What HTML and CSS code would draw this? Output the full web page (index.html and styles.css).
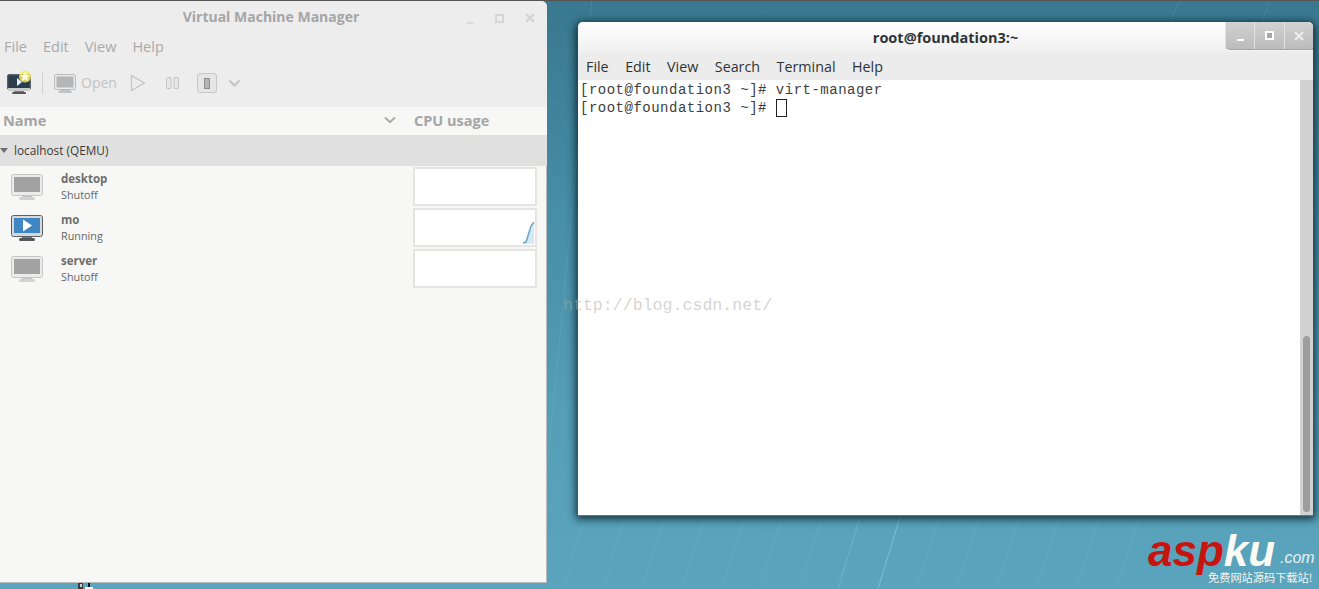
FILE: index.html
```html
<!DOCTYPE html>
<html lang="en">
<head>
<meta charset="utf-8">
<title>Virtual Machine Manager</title>
<link rel="stylesheet" href="styles.css">
</head>
<body>
<div class="desktop">
  <svg class="streaks" width="1319" height="589" viewBox="0 0 1319 589">
    <g stroke="#8fcbdc" stroke-width="1" fill="none" opacity=".16">
      <path d="M563 589L585 517"/><path d="M603 589L625 517"/><path d="M642 589L664 517"/><path d="M682 589L704 517"/><path d="M722 589L744 517"/><path d="M760 589L782 517"/><path d="M800 589L822 517"/>
      <path d="M917 589L939 517"/><path d="M957 589L979 517"/><path d="M997 589L1019 517"/><path d="M1037 589L1059 517"/><path d="M1077 589L1099 517"/><path d="M1117 589L1139 517"/>
      <path d="M548 460L592 0"/><path d="M1170 22L1180 0"/><path d="M1262 22L1270 0"/>
    </g>
    <path d="M838 589L860 517" stroke="#a5d6e4" stroke-width="1" opacity=".3"/>
    <path d="M878 589L900 517" stroke="#a5d6e4" stroke-width="1" opacity=".5"/>
  </svg>

  <svg class="behind-icons" width="15" height="6" viewBox="0 0 15 6">
    <rect x="0" y="0" width="5" height="6" fill="#3c3c3c"/><rect x="2" y="1" width="2" height="3" fill="#ccc"/>
    <rect x="10" y="0" width="2" height="5" fill="#111"/><rect x="7" y="4" width="8" height="2" fill="#fff"/>
  </svg>

  <section class="window vmm">
    <header class="vmm-title">
      <span class="vmm-title-text">Virtual Machine Manager</span>
      <div class="vmm-controls">
        <span class="ctl-min"></span>
        <span class="ctl-max"></span>
        <svg class="ctl-close" width="12" height="12" viewBox="0 0 12 12"><path d="M2 2L10 10M10 2L2 10" stroke="#d4d4d4" stroke-width="2.4"/></svg>
      </div>
    </header>
    <nav class="vmm-menu">
      <span>File</span><span>Edit</span><span>View</span><span>Help</span>
    </nav>
    <div class="vmm-toolbar">
      <svg class="tb-new" width="26" height="26" viewBox="0 0 26 26">
        <rect x="0.5" y="4.5" width="23" height="15" rx="1.5" fill="#3c4a58" stroke="#5d6266"/>
        <rect x="2" y="6" width="20" height="12" fill="#2d3d50"/>
        <path d="M10 8L15 12L10 16Z" fill="#eef2f6"/>
        <rect x="1" y="18" width="22" height="3" fill="#c9cbc8"/>
        <rect x="7" y="21" width="10" height="1" fill="#777"/>
        <rect x="5" y="22" width="14" height="2" rx="1" fill="#55585a"/>
        <circle cx="18" cy="6.5" r="6" fill="#f3ec62" opacity=".85"/>
        <path d="M18 1.5L19.5 5L23 5.3L20.3 7.6L21.2 11L18 9.2L14.8 11L15.7 7.6L13 5.3L16.5 5Z" fill="#fffbe0"/>
      </svg>
      <span class="tb-sep"></span>
      <svg class="tb-open" width="24" height="22" viewBox="0 0 24 22">
        <rect x="0.5" y="1.5" width="21" height="15" rx="1.5" fill="#e8e8e8" stroke="#bdbdbd"/>
        <rect x="2.5" y="3.5" width="17" height="11" fill="#b3b5b6"/>
        <rect x="6" y="17" width="10" height="1" fill="#bbb"/>
        <rect x="4" y="18" width="14" height="2" rx="1" fill="#c3c3c3"/>
      </svg>
      <span class="tb-label">Open</span>
      <svg class="tb-play" width="16" height="18" viewBox="0 0 16 18"><path d="M1.5 1.5L14.5 9L1.5 16.5Z" fill="#ececec" stroke="#c3c3c3" stroke-width="1.2"/></svg>
      <svg class="tb-pause" width="14" height="14" viewBox="0 0 14 14"><rect x="0.5" y="1.5" width="4.5" height="11" rx="1" fill="#e6e6e6" stroke="#c3c3c3"/><rect x="8" y="1.5" width="4.5" height="11" rx="1" fill="#e6e6e6" stroke="#c3c3c3"/></svg>
      <span class="tb-stop"><span class="tb-stop-inner"></span></span>
      <svg class="tb-chevron" width="13" height="9" viewBox="0 0 13 9"><path d="M1.5 1.5L6.5 6.5L11.5 1.5" fill="none" stroke="#c4c4c4" stroke-width="2"/></svg>
    </div>
    <div class="vmm-columns">
      <div class="col-name">
        <span>Name</span>
        <svg width="12" height="8" viewBox="0 0 12 8"><path d="M1 1.5L6 6.2L11 1.5" fill="none" stroke="#aaa" stroke-width="2"/></svg>
      </div>
      <div class="col-cpu">CPU usage</div>
    </div>
    <div class="vmm-group">
      <span class="group-arrow"></span>
      <span>localhost (QEMU)</span>
    </div>
    <ul class="vm-list">
      <li class="vm">
        <svg class="vm-icon" width="32" height="28" viewBox="0 0 32 28">
          <rect x="0.5" y="0.5" width="31" height="21" rx="2" fill="#ebebeb" stroke="#c6c6c6"/>
          <rect x="3" y="3" width="26" height="15" fill="#a2a2a2"/>
          <rect x="11" y="22" width="10" height="1" fill="#c4c4c4"/>
          <rect x="8" y="23" width="16" height="3" rx="1.5" fill="#d2d2d2"/>
        </svg>
        <div class="vm-text"><strong>desktop</strong><span>Shutoff</span></div>
        <div class="graph"></div>
      </li>
      <li class="vm">
        <svg class="vm-icon" width="32" height="28" viewBox="0 0 32 28">
          <rect x="0.5" y="0.5" width="31" height="21" rx="2" fill="#d6d8da" stroke="#5a5f63"/>
          <rect x="3" y="3" width="26" height="15" fill="#4186c4"/>
          <path d="M12 4.5L21 10.5L12 16.5Z" fill="#ffffff"/>
          <rect x="11" y="22" width="10" height="1" fill="#777"/>
          <rect x="8" y="23" width="16" height="3" rx="1.5" fill="#55585a"/>
        </svg>
        <div class="vm-text"><strong>mo</strong><span>Running</span></div>
        <div class="graph">
          <svg class="spark" width="12" height="22" viewBox="0 0 12 22">
            <path d="M0 21L3 20L8 4L11 0V22H0Z" fill="#d2e9f3"/>
            <path d="M0 21L3 20L8 4L11 0" fill="none" stroke="#6fa8c2" stroke-width="1.6"/>
          </svg>
        </div>
      </li>
      <li class="vm">
        <svg class="vm-icon" width="32" height="28" viewBox="0 0 32 28">
          <rect x="0.5" y="0.5" width="31" height="21" rx="2" fill="#ebebeb" stroke="#c6c6c6"/>
          <rect x="3" y="3" width="26" height="15" fill="#a2a2a2"/>
          <rect x="11" y="22" width="10" height="1" fill="#c4c4c4"/>
          <rect x="8" y="23" width="16" height="3" rx="1.5" fill="#d2d2d2"/>
        </svg>
        <div class="vm-text"><strong>server</strong><span>Shutoff</span></div>
        <div class="graph"></div>
      </li>
    </ul>
  </section>

  <section class="window term">
    <header class="term-title">root@foundation3:~</header>
    <div class="term-controls">
      <span class="term-btn"><span class="tc-min"></span></span>
      <span class="term-btn"><span class="tc-max"></span></span>
      <span class="term-btn"><svg width="12" height="12" viewBox="0 0 12 12"><path d="M2 2L10 10M10 2L2 10" stroke="#ececec" stroke-width="2.4"/></svg></span>
    </div>
    <nav class="term-menu">
      <span>File</span><span>Edit</span><span>View</span><span>Search</span><span>Terminal</span><span>Help</span>
    </nav>
    <div class="term-body">
      <pre class="term-text">[root@foundation3 ~]# virt-manager
[root@foundation3 ~]# <span class="cursor"></span></pre>
      <div class="term-scroll"><div class="term-thumb"></div></div>
    </div>
  </section>

  <div class="watermark">http://blog.csdn.net/</div>

  <div class="aspku">
    <div class="aspku-main"><span class="aspku-red">asp</span><span class="aspku-white">ku</span></div>
    <div class="aspku-com">.com</div>
    <div class="aspku-sub">免费网站源码下载站!</div>
  </div>
</div>
</body>
</html>
```
FILE: styles.css
```css
* { box-sizing: border-box; }
html, body { margin: 0; padding: 0; }
body { width: 1319px; height: 589px; overflow: hidden; font-family: "Open Sans", "Noto Sans", sans-serif; }

.desktop {
  position: relative;
  width: 1319px;
  height: 589px;
  overflow: hidden;
  border-top: 1px solid #555;
  background: linear-gradient(180deg, #39788f 0%, #468da5 35%, #549eb6 70%, #5aa5bd 100%);
}
.streaks { position: absolute; left: 0; top: -1px; }
.behind-icons { position: absolute; left: 78px; top: 582px; }

.window { position: absolute; }

/* Virtual Machine Manager */
.vmm {
  left: 0; top: 0;
  width: 547px; height: 582px;
  display: flex; flex-direction: column;
  background: #f7f7f5;
  border-radius: 0 6px 0 0;
  box-shadow: inset -1px -1px 0 #b9bcbc;
  overflow: hidden;
}
.vmm-title {
  height: 32px; flex: none;
  display: flex; align-items: center; justify-content: center;
  position: relative;
  background: #ededed;
}
.vmm-title-text { font-size: 14px; font-weight: 700; color: #a5a5a5; margin-left: -5px; margin-top: -1px; }
.vmm-controls {
  position: absolute; right: 11px; top: 11px;
  display: flex; align-items: center; gap: 20px;
}
.ctl-min { width: 7px; height: 2px; background: #dcdcdc; margin-top: 9px; }
.ctl-max { width: 9px; height: 9px; border: 2px solid #d6d6d6; margin-left: 1px; }
.vmm-menu {
  height: 27px; flex: none;
  display: flex; align-items: center; gap: 16px;
  padding: 0 0 0 4px;
  background: #ededed;
  font-size: 14.5px; color: #a9a9a9;
}
.vmm-toolbar {
  height: 47px; flex: none;
  display: flex; align-items: center;
  padding: 0 0 1px 7px;
  background: #ededed;
}
.tb-new { margin-right: 9px; }
.tb-sep { width: 1px; height: 22px; background: #d2d2d2; margin-right: 11px; }
.tb-open { margin-right: 3px; margin-top: 1px; }
.tb-label { font-size: 14px; color: #c2c2c2; width: 49px; margin-top: -1px; }
.tb-play { margin-right: 20px; }
.tb-pause { margin-right: 17px; }
.tb-stop {
  width: 20px; height: 20px; margin-right: 11px;
  display: flex; align-items: center; justify-content: center;
  border: 1px solid #c8c8c8; border-radius: 3px; background: #e6e6e6;
}
.tb-stop-inner { width: 6px; height: 11px; background: #b5b5b5; border: 1px solid #8e8e8e; }
.vmm-columns {
  height: 28px; flex: none;
  display: flex; align-items: center;
  padding-bottom: 2px;
  background: #f7f7f5;
  font-size: 14.5px; font-weight: 700; color: #a5a5a5;
}
.col-name {
  width: 414px; flex: none;
  display: flex; align-items: center; justify-content: space-between;
  padding: 0 18px 0 3px;
}
.vmm-group {
  height: 31px; flex: none;
  display: flex; align-items: center; gap: 6px;
  padding-bottom: 2px;
  background: #e0e0e0;
  font-size: 11.8px; color: #3a3a3a;
}
.group-arrow {
  width: 0; height: 0;
  border-left: 4px solid transparent; border-right: 4px solid transparent;
  border-top: 5px solid #6e6e6e;
  margin-top: 1px;
}
.vm-list { list-style: none; margin: 0; padding: 0; flex: 1; }
.vm {
  height: 41px;
  display: flex; align-items: center;
  padding-left: 11px;
}
.vm-icon { flex: none; margin-right: 18px; margin-top: 2px; }
.vm-text {
  width: 352px; flex: none;
  display: flex; flex-direction: column;
  margin-top: -1px;
  font-size: 10.8px; line-height: 15px; color: #666;
}
.vm-text strong { font-size: 11.5px; color: #6e6e6e; font-weight: 700; }
.vm-text span { position: relative; top: 1px; }
.graph {
  position: relative;
  width: 124px; height: 39px; flex: none;
  background: #fff;
  border: 2px solid #e6e4e2;
}
.spark { position: absolute; right: 0; bottom: 1px; }

/* Terminal */
.term {
  left: 578px; top: 21px;
  width: 735px; height: 493px;
  display: flex; flex-direction: column;
  border-radius: 5px 5px 0 0;
  background: #ececec;
  box-shadow: 0 1px 1px #777, 0 2px 9px 2px rgba(5,25,35,.85);
}
.term-title {
  height: 30px; flex: none;
  display: flex; align-items: center; justify-content: center;
  border-radius: 5px 5px 0 0;
  background: linear-gradient(180deg, #ffffff 0%, #f0f0f0 100%);
  font-size: 14.5px; font-weight: 700; color: #2e3436;
}
.term-controls {
  position: absolute; right: 0; top: 0;
  width: 88px; height: 28px;
  display: flex;
  border-radius: 0 5px 0 5px;
  border-bottom: 1px solid #a8a8a8;
  background: linear-gradient(180deg, #d2d2d2 0%, #bcbcbc 100%);
}
.term-btn {
  flex: 1;
  display: flex; align-items: center; justify-content: center;
  border-left: 1px solid #e2e2e2;
}
.tc-min { width: 7px; height: 2px; background: #fff; margin-top: 9px; }
.tc-max { width: 9px; height: 9px; border: 2px solid #fff; background: #a8a8a8; }
.term-menu {
  height: 28px; flex: none;
  display: flex; align-items: center; gap: 16.5px;
  padding: 0 0 0 8px;
  font-size: 14.3px; color: #2e3436;
}
.term-body {
  flex: 1;
  display: flex;
  min-height: 0;
  background: #fff;
}
.term-text {
  flex: 1;
  margin: 0; padding: 1px 0 0 2px;
  font-family: "Liberation Mono", monospace;
  font-size: 14px; letter-spacing: .5px; line-height: 18px;
  color: #3c4042;
}
.cursor {
  display: inline-block;
  width: 11px; height: 18px;
  border: 1px solid #222;
  vertical-align: top;
}
.term-scroll {
  width: 13px; flex: none;
  display: flex; flex-direction: column; justify-content: flex-end;
  padding: 0 3px 3px 3px;
  background: #d2d2d2;
}
.term-thumb { height: 176px; border-radius: 4px; background: #9d9d9d; }

/* Overlays */
.watermark {
  position: absolute; left: 563px; top: 295px;
  font-family: "Liberation Mono", monospace;
  font-size: 16.6px; line-height: 20px;
  color: rgba(170,170,160,.5);
}
.aspku {
  position: absolute; left: 1148px; top: 528px;
  width: 171px; height: 60px;
}
.aspku-main {
  position: absolute; left: 0; top: 0;
  font-family: "Liberation Sans", sans-serif;
  font-style: italic; font-weight: 700;
  font-size: 44px; line-height: 44px;
  white-space: nowrap;
}
.aspku-red { color: #c8140f; }
.aspku-white { color: #fbfaf5; }
.aspku-com {
  position: absolute; left: 132px; top: 20px;
  font-family: "Liberation Sans", sans-serif;
  font-style: italic; font-size: 16px; line-height: 18px; color: #e6f0f3;
}
.aspku-sub {
  position: absolute; left: 60px; top: 41px;
  font-family: "Noto Sans CJK SC", sans-serif;
  font-size: 11.2px; line-height: 14px; white-space: nowrap;
  color: #f4f4f0;
}
```
